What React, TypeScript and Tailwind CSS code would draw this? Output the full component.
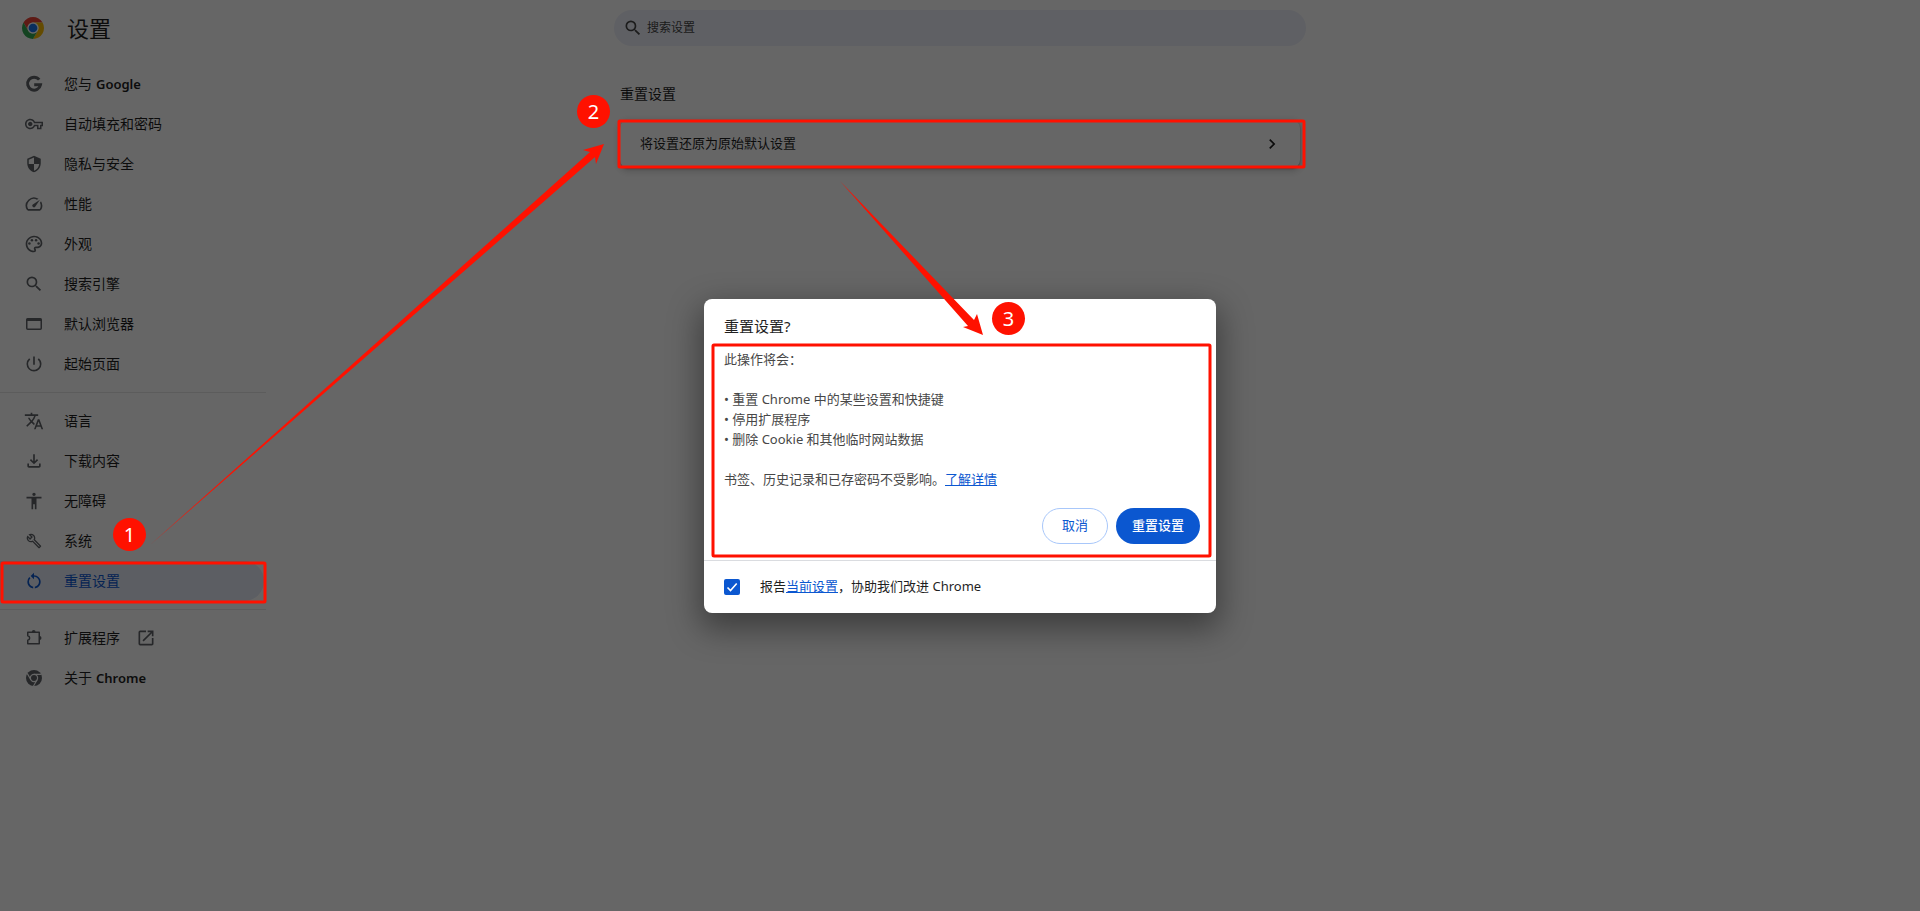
import { useState } from 'react'
import type { ReactNode } from 'react'
import {
  MdOutlinePalette,
  MdSearch,
  MdPowerSettingsNew,
  MdTranslate,
  MdOutlineFileDownload,
  MdAccessibility,
  MdOpenInNew,
  MdChevronRight,
  MdRestartAlt,
} from 'react-icons/md'

interface NavItem {
  label: string
  brand?: string
  icon: ReactNode
  active?: boolean
  external?: boolean
}

function Glyph({ d, className = 'size-5' }: { d: string; className?: string }) {
  return (
    <svg viewBox="0 0 24 24" className={className} fill="currentColor">
      <path d={d} />
    </svg>
  )
}

const groups: NavItem[][] = [
  [
    {
      label: '您与',
      brand: 'Google',
      icon: (
        <svg viewBox="0 0 20 20" className="size-5" fill="none" stroke="currentColor" strokeWidth="3">
          <path d="M15.2 5.6A6.5 6.5 0 1 0 16.5 10.8H10.2" />
        </svg>
      ),
    },
    {
      label: '自动填充和密码',
      icon: (
        <Glyph
          className="size-[18px]"
          d="M22 19h-6v-4h-2.68c-1.14 2.42-3.6 4-6.32 4-3.86 0-7-3.14-7-7s3.14-7 7-7c2.72 0 5.17 1.58 6.32 4H24v6h-2v4zm-4-2h2v-4h2v-2H11.94l-.23-.67C11.01 8.34 9.11 7 7 7c-2.76 0-5 2.24-5 5s2.24 5 5 5c2.11 0 4.01-1.34 4.71-3.33l.23-.67H18v4zM7 15c-1.65 0-3-1.35-3-3s1.35-3 3-3 3 1.35 3 3-1.35 3-3 3z"
        />
      ),
    },
    {
      label: '隐私与安全',
      icon: (
        <Glyph
          className="size-[18px]"
          d="M12 1 3 5v6c0 5.55 3.84 10.74 9 12 5.16-1.26 9-6.45 9-12V5l-9-4Zm0 10.99h7c-.53 4.12-3.28 7.79-7 8.94V12H5V6.3l7-3.11v8.8Z"
        />
      ),
    },
    {
      label: '性能',
      icon: (
        <Glyph d="m20.38 8.57-1.23 1.85a8 8 0 0 1-.22 7.58H5.07A8 8 0 0 1 15.58 6.85l1.85-1.23A10 10 0 0 0 3.35 19a2 2 0 0 0 1.72 1h13.85a2 2 0 0 0 1.74-1 10 10 0 0 0-.27-10.44zM10.59 15.41a2 2 0 0 0 2.83 0l5.66-8.49-8.49 5.66a2 2 0 0 0 0 2.83z" />
      ),
    },
    { label: '外观', icon: <MdOutlinePalette size={20} /> },
    { label: '搜索引擎', icon: <MdSearch size={20} /> },
    {
      label: '默认浏览器',
      icon: (
        <svg viewBox="0 0 20 20" className="size-5" fill="none" stroke="currentColor" strokeWidth="1.5">
          <rect x="2.75" y="4.75" width="14.5" height="10.5" rx="1" />
          <path d="M2.75 5.75h14.5" strokeWidth="2.5" />
        </svg>
      ),
    },
    { label: '起始页面', icon: <MdPowerSettingsNew size={20} /> },
  ],
  [
    { label: '语言', icon: <MdTranslate size={20} /> },
    { label: '下载内容', icon: <MdOutlineFileDownload size={20} /> },
    { label: '无障碍', icon: <MdAccessibility size={20} /> },
    {
      label: '系统',
      icon: (
        <Glyph
          className="size-4"
          d="M22.61 18.99l-9.08-9.08c.93-2.34.45-5.1-1.44-7C9.79.61 6.21.4 3.66 2.26L7.5 6.11 6.08 7.52 2.25 3.69C.39 6.23.6 9.82 2.9 12.11c1.86 1.86 4.57 2.35 6.89 1.48l9.11 9.11c.39.39 1.02.39 1.41 0l2.3-2.3c.4-.38.4-1.01 0-1.41zm-3 1.6l-9.46-9.46c-.61.45-1.29.72-2 .82-1.36.2-2.79-.21-3.83-1.25C3.37 9.76 2.93 8.5 3 7.26l3.09 3.09 4.24-4.24-3.09-3.09c1.24-.07 2.49.37 3.44 1.31 1.08 1.08 1.49 2.57 1.24 3.96-.12.71-.42 1.37-.88 1.96l9.45 9.45-.88.89z"
        />
      ),
    },
    { label: '重置设置', active: true, icon: <MdRestartAlt size={20} /> },
  ],
  [
    {
      label: '扩展程序',
      external: true,
      icon: (
        <svg viewBox="0 0 20 20" className="size-5" fill="none" stroke="currentColor" strokeWidth="1.5">
          <path d="M3.75 4.25h11.5v11.5H3.75v-3.4a2.4 2.4 0 0 0 0-4.7Z" strokeLinejoin="round" />
          <path d="M7.8 4a1.9 1.9 0 0 1 3.8 0ZM15.6 8.1a1.9 1.9 0 0 1 0 3.8Z" fill="currentColor" stroke="none" />
        </svg>
      ),
    },
    {
      label: '关于',
      brand: 'Chrome',
      icon: (
        <svg viewBox="0 0 20 20" className="size-5">
          <circle cx="10" cy="10" r="8" fill="currentColor" />
          <g fill="none" stroke="#fff" strokeWidth="1.2">
            <circle cx="10" cy="10" r="3.6" />
            <path d="M10 6.4H17.5M6.9 11.8 3.2 5.4M13.1 11.8 9.4 18.2" />
          </g>
        </svg>
      ),
    },
  ],
]

function ChromeLogo() {
  return (
    <svg viewBox="0 0 48 48" className="size-6">
      <circle cx="24" cy="24" r="22" fill="#fff" />
      <path d="M4.95 13A22 22 0 0 1 43.05 13H24A11 11 0 0 0 14.5 29.5Z" fill="#ea4335" />
      <path d="M43.05 13A22 22 0 0 1 24 46L33.5 29.5A11 11 0 0 0 24 13Z" fill="#fbbc04" />
      <path d="M24 46A22 22 0 0 1 4.95 13L14.5 29.5A11 11 0 0 0 33.5 29.5Z" fill="#34a853" />
      <circle cx="24" cy="24" r="11" fill="#fff" />
      <circle cx="24" cy="24" r="8.7" fill="#1a73e8" />
    </svg>
  )
}

function Sidebar() {
  return (
    <nav className="w-[266px] shrink-0 pt-2">
      {groups.map((items, i) => (
        <ul key={i} className={i > 0 ? 'mt-2 border-t border-black/10 pt-2' : ''}>
          {items.map((item) => (
            <li key={item.label}>
              <a
                href="#"
                className={`mr-0.5 flex h-10 items-center rounded-r-full pl-6 text-sm ${
                  item.active ? 'bg-[#e6ebf7] text-[#0b57d0]' : 'text-[#1f1f1f]'
                }`}
              >
                <span
                  className={`mr-5 flex size-5 items-center justify-center ${item.active ? '' : 'text-[#5f6368]'}`}
                >
                  {item.icon}
                </span>
                {item.label}
                {item.brand && <span className="ml-1 text-[13px] font-semibold">{item.brand}</span>}
                {item.external && <MdOpenInNew size={20} className="ml-4 text-[#5f6368]" />}
              </a>
            </li>
          ))}
        </ul>
      ))}
    </nav>
  )
}

function ResetDialog() {
  const [report, setReport] = useState(true)

  return (
    <div
      role="dialog"
      aria-labelledby="reset-title"
      className="w-[512px] rounded-lg bg-white shadow-[0_12px_32px_4px_rgba(0,0,0,0.4)]"
    >
      <h2 id="reset-title" className="px-5 pt-[15px] text-[15px] leading-6 text-[#1f1f1f]">
        重置设置?
      </h2>
      <div className="px-5 pt-[11px] text-[13px] leading-5 text-[#474747]">
        <p>此操作将会：</p>
        <ul className="py-5">
          <li>• 重置 Chrome 中的某些设置和快捷键</li>
          <li>• 停用扩展程序</li>
          <li>• 删除 Cookie 和其他临时网站数据</li>
        </ul>
        <p>
          书签、历史记录和已存密码不受影响。
          <a href="#" className="text-[#0b57d0] underline">了解详情</a>
        </p>
      </div>
      <div className="flex justify-end gap-2 px-4 pt-[19px] pb-4 text-[13px]">
        <button className="h-9 rounded-full border border-[#a8c7fa] px-[19px] text-[#0b57d0]">取消</button>
        <button className="h-9 rounded-full bg-[#0b57d0] px-4 font-medium text-white">重置设置</button>
      </div>
      <div className="flex h-[53px] items-center border-t border-[#dadce0] px-5 text-[13px] text-[#1f1f1f]">
        <span className="relative mr-5 size-4">
          <input
            id="report"
            type="checkbox"
            checked={report}
            onChange={(e) => setReport(e.target.checked)}
            className="block size-4 appearance-none rounded-xs border-2 border-[#0b57d0] checked:bg-[#0b57d0]"
          />
          {report && (
            <svg
              viewBox="0 0 16 16"
              className="pointer-events-none absolute inset-0 size-4"
              fill="none"
              stroke="#fff"
              strokeWidth="1.6"
            >
              <path d="m3.5 8.5 3 3 6.2-7" />
            </svg>
          )}
        </span>
        <label htmlFor="report">
          报告<a href="#" className="text-[#0b57d0] underline">当前设置</a>，协助我们改进 Chrome
        </label>
      </div>
    </div>
  )
}

function Badge({ n, className }: { n: number; className: string }) {
  return (
    <span
      className={`absolute flex size-[33px] items-center justify-center rounded-full bg-[#ff1100] text-xl text-white ${className}`}
    >
      {n}
    </span>
  )
}

// Numbered walkthrough marks drawn on top of everything
function Annotations() {
  return (
    <div className="pointer-events-none absolute inset-0 z-20">
      <svg viewBox="0 0 1920 911" className="absolute top-0 left-0 h-[911px] w-[1920px]" fill="#ff1100">
        <path d="M150 545 590 152 583 150 604 144 596 164 595 157Z" />
        <path d="M840 181 974 320 977 314 983 335 963 327 968 326Z" />
        <g fill="none" stroke="#ff1100" strokeWidth="3">
          <rect x="2" y="563" width="263" height="39" rx="1" />
          <rect x="619" y="121" width="685" height="46" rx="1" />
          <rect x="713" y="345" width="497" height="211" rx="1" />
        </g>
      </svg>
      <Badge n={1} className="top-[518px] left-[113px]" />
      <Badge n={2} className="top-[95px] left-[577px]" />
      <Badge n={3} className="top-[302px] left-[992px]" />
    </div>
  )
}

export default function App() {
  return (
    <div className="relative min-h-screen overflow-hidden bg-white font-['Noto_Sans','Noto_Sans_CJK_SC',sans-serif] text-[#1f1f1f]">
      <header className="grid h-14 grid-cols-[1fr_auto_1fr] items-center">
        <div className="flex items-center gap-[22px] pl-[21px]">
          <ChromeLogo />
          <h1 className="text-[22px]">设置</h1>
        </div>
        <label className="flex h-9 w-[692px] items-center rounded-full bg-[#edf0fa] pl-[9px]">
          <MdSearch size={20} className="mr-1 text-[#474747]" />
          <input
            type="search"
            aria-label="搜索设置"
            placeholder="搜索设置"
            className="flex-1 bg-transparent text-xs outline-none placeholder:text-[#474747]"
          />
        </label>
      </header>

      <div className="flex">
        <Sidebar />
        <main className="mr-[266px] flex flex-1 justify-center">
          <section className="w-[680px] pt-7">
            <h2 className="pb-4 text-sm">重置设置</h2>
            <button className="flex h-12 w-full items-center justify-between rounded-lg bg-white pr-[18px] pl-5 text-[13px] shadow-[0_1px_2px_rgba(0,0,0,0.3),0_2px_6px_2px_rgba(0,0,0,0.15)]">
              将设置还原为原始默认设置
              <MdChevronRight size={20} />
            </button>
          </section>
        </main>
      </div>

      <div className="absolute inset-0 z-10 flex items-center justify-center bg-black/60">
        <ResetDialog />
      </div>
      <Annotations />
    </div>
  )
}
